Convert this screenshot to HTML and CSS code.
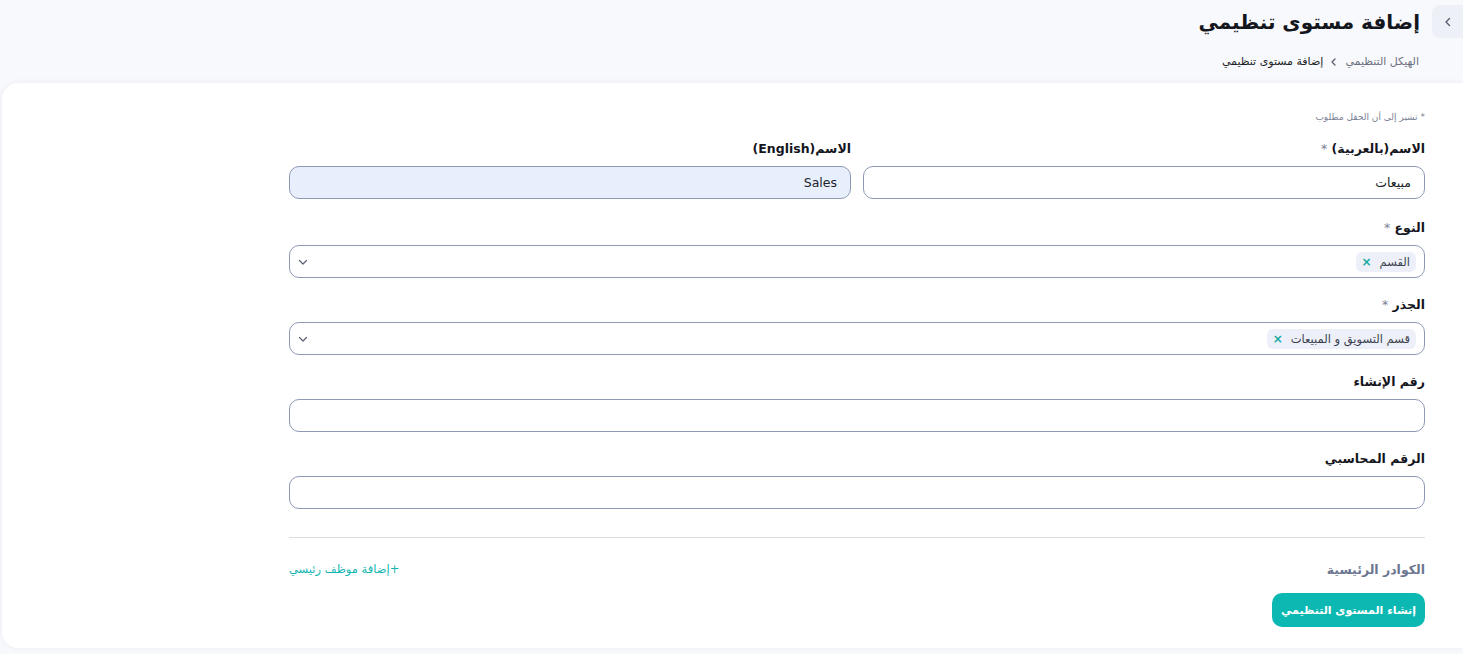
FILE: index.html
```html
<!DOCTYPE html>
<html lang="ar" dir="rtl">
<head>
    <meta charset="UTF-8">
    <meta name="viewport" content="width=device-width, initial-scale=1.0">
    <title>إضافة مستوى تنظيمي</title>
    <link rel="stylesheet" href="styles.css">
</head>
<body>
    <div class="page-header">
        <div class="title-row">
            <button class="back-btn" type="button">
                <svg width="12" height="12" viewBox="0 0 12 12"><path d="M7.5 2.5 4 6l3.5 3.5" fill="none" stroke="#555c6e" stroke-width="1.4" stroke-linecap="round" stroke-linejoin="round"/></svg>
            </button>
            <h1>إضافة مستوى تنظيمي</h1>
        </div>
        <div class="breadcrumb">
            <span class="crumb">الهيكل التنظيمي</span>
            <svg class="crumb-sep" width="10" height="10" viewBox="0 0 10 10"><path d="M6 2 3 5l3 3" fill="none" stroke="#555c6e" stroke-width="1.3" stroke-linecap="round" stroke-linejoin="round"/></svg>
            <span class="crumb current">إضافة مستوى تنظيمي</span>
        </div>
    </div>

    <div class="card">
        <form class="level-form">
            <p class="required-note">* تشير إلى أن الحقل مطلوب</p>

            <div class="row two-cols">
                <div class="field">
                    <label>الاسم(بالعربية) <span class="star">*</span></label>
                    <input class="input" type="text" value="مبيعات">
                </div>
                <div class="field">
                    <label>الاسم(English)</label>
                    <input class="input filled" type="text" value="Sales" dir="ltr">
                </div>
            </div>

            <div class="field">
                <label>النوع <span class="star">*</span></label>
                <div class="select">
                    <span class="chip">القسم<span class="chip-x">×</span></span>
                    <svg class="caret" width="10" height="10" viewBox="0 0 10 10"><path d="M1.5 3.5 5 7l3.5-3.5" fill="none" stroke="#5a6173" stroke-width="1.2" stroke-linecap="round" stroke-linejoin="round"/></svg>
                </div>
            </div>

            <div class="field">
                <label>الجذر <span class="star">*</span></label>
                <div class="select">
                    <span class="chip">قسم التسويق و المبيعات<span class="chip-x">×</span></span>
                    <svg class="caret" width="10" height="10" viewBox="0 0 10 10"><path d="M1.5 3.5 5 7l3.5-3.5" fill="none" stroke="#5a6173" stroke-width="1.2" stroke-linecap="round" stroke-linejoin="round"/></svg>
                </div>
            </div>

            <div class="field">
                <label>رقم الإنشاء</label>
                <input class="input" type="text">
            </div>

            <div class="field">
                <label>الرقم المحاسبي</label>
                <input class="input" type="text">
            </div>

            <hr class="divider">

            <div class="staff-row">
                <span class="staff-title">الكوادر الرئيسية</span>
                <a href="#" class="add-link">+إضافة موظف رئيسي</a>
            </div>

            <button class="submit-btn" type="button">إنشاء المستوى التنظيمي</button>
        </form>
    </div>
</body>
</html>
```

FILE: styles.css
```css
/* Grund */
body {
    font-family: "DejaVu Sans", "Noto Sans", sans-serif;
    margin: 0;
    background: #f8f9fc;
    color: #1c1f2a;
    height: 654px;
    overflow: hidden;
}

/* Header */
.page-header {
    padding: 5px 0 0 0;
    height: 78px;
}

.title-row {
    display: flex;
    align-items: center;
    gap: 12px;
}

.back-btn {
    width: 31px;
    height: 33px;
    border: none;
    border-radius: 8px 0 0 8px;
    background: #eef0f8;
    display: flex;
    align-items: center;
    justify-content: center;
    padding: 0;
}

.title-row h1 {
    margin: 0;
    font-size: 20px;
    font-weight: bold;
    color: #14161d;
}

.breadcrumb {
    display: flex;
    align-items: center;
    gap: 6px;
    margin-top: 17px;
    padding-right: 44px;
    font-size: 11px;
}

.crumb {
    color: #6b7080;
}

.crumb.current {
    color: #1c1f2a;
}

/* Kort */
.card {
    background: white;
    margin-left: 2px;
    height: 565px;
    border-radius: 16px 0 0 16px;
    box-shadow: 0 0 6px rgba(30, 40, 90, 0.06);
    padding: 29px 38px 0 0;
    box-sizing: border-box;
}

.level-form {
    width: 1136px;
}

.required-note {
    margin: 0 0 19px 0;
    font-size: 9px;
    color: #7b8194;
}

.row.two-cols {
    display: grid;
    grid-template-columns: 1fr 1fr;
    gap: 12px;
}

.field {
    margin-bottom: 19px;
}

.two-cols .field {
    margin-bottom: 21px;
}

.field label {
    display: block;
    font-size: 12.5px;
    font-weight: bold;
    color: #14161d;
    margin-bottom: 9px;
    height: 16px;
}

.star {
    color: #7b8194;
    font-weight: normal;
}

.input {
    display: block;
    width: 100%;
    box-sizing: border-box;
    height: 33px;
    border: 1px solid #8e99b5;
    border-radius: 10px;
    padding: 0 13px;
    font-family: inherit;
    font-size: 12.5px;
    color: #1c1f2a;
    background: white;
    outline: none;
}

.input.filled {
    background: #e8effc;
    text-align: right;
}

.select {
    height: 33px;
    box-sizing: border-box;
    border: 1px solid #8e99b5;
    border-radius: 10px;
    display: flex;
    align-items: center;
    justify-content: space-between;
    padding: 0 8px 0 8px;
}

.chip {
    display: inline-flex;
    align-items: center;
    gap: 8px;
    height: 20px;
    padding: 0 6px;
    border-radius: 6px;
    background: #edf0f8;
    font-size: 11.5px;
    color: #3a3f4f;
}

.chip-x {
    color: #14a8a4;
    font-weight: bold;
    font-size: 12px;
}

.divider {
    border: none;
    border-top: 1px solid #dcdde2;
    margin: 28px 0 23px 0;
}

.staff-row {
    display: flex;
    justify-content: space-between;
    align-items: center;
    height: 16px;
    margin-bottom: 16px;
}

.staff-title {
    font-size: 12.5px;
    font-weight: bold;
    color: #6b7690;
}

.add-link {
    font-size: 11.5px;
    color: #12b5b0;
    text-decoration: none;
}

.submit-btn {
    height: 34px;
    padding: 0 9px;
    border: none;
    border-radius: 10px;
    background: #0bb9b2;
    color: white;
    font-family: inherit;
    font-size: 11px;
    font-weight: bold;
}
```
